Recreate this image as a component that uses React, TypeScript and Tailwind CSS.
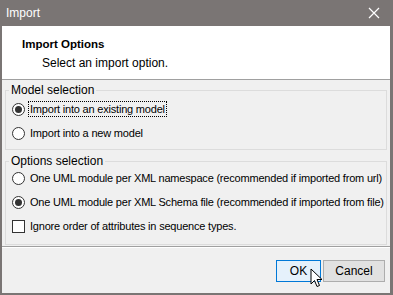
import React, { useState } from "react";

const font = { fontFamily: '"Liberation Sans", Arial, sans-serif' };

const Radio: React.FC<{ checked: boolean; label: string; focused?: boolean; onClick: () => void }> = ({
  checked,
  label,
  focused,
  onClick,
}) => (
  <div className="flex items-center h-[24px] pl-[6px] cursor-default whitespace-nowrap" onClick={onClick}>
    <span className="w-[13px] h-[13px] shrink-0 rounded-full border border-[#333] bg-white flex items-center justify-center">
      {checked && <span className="w-[7px] h-[7px] rounded-full bg-[#333]" />}
    </span>
    <span
      className={
        "ml-[4px] leading-[14px] px-[1px] tracking-[-0.2px] " +
        (focused ? "outline outline-1 outline-dotted outline-black" : "")
      }
    >
      {label}
    </span>
  </div>
);

const App: React.FC = () => {
  const [model, setModel] = useState("existing");
  const [mode, setMode] = useState("file");
  const [ignoreOrder, setIgnoreOrder] = useState(false);

  return (
    <div
      className="w-[393px] h-[295px] bg-[#7a7574] pl-[2px] pr-[3px] pb-[2px] flex flex-col text-[11px] text-black"
      style={font}
    >
      <div className="h-[26px] flex items-center justify-between text-white">
        <span className="pl-[4px] text-[12px]">Import</span>
        <svg width="12" height="12" viewBox="0 0 12 12" className="mr-[10px]">
          <path d="M1 1L11 11M11 1L1 11" stroke="white" strokeWidth="1.2" />
        </svg>
      </div>

      <div className="flex-1 bg-[#f0f0f0] flex flex-col">
        <div className="h-[54px] bg-white border-b border-[#a0a0a0] pt-[10px] pl-[20px] text-[12px]">
          <div className="font-bold leading-[16px] text-[11.5px]">Import Options</div>
          <div className="pl-[20px] mt-[3px] leading-[16px]">Select an import option.</div>
        </div>

        <div className="px-[3px] pt-[2px]">
          <fieldset className="min-w-0 border border-[#dcdcdc] px-[0px] pb-[4px] h-[68px]">
            <legend className="ml-[3px] px-[2px] leading-[16px] text-[12px]">Model selection</legend>
            <div className="-mt-[1px]">
              <Radio
                checked={model === "existing"}
                label="Import into an existing model"
                focused
                onClick={() => setModel("existing")}
              />
              <Radio checked={model === "new"} label="Import into a new model" onClick={() => setModel("new")} />
            </div>
          </fieldset>

          <fieldset className="min-w-0 border border-[#dcdcdc] mt-[3px] h-[92px]">
            <legend className="ml-[3px] px-[2px] leading-[16px] text-[12px]">Options selection</legend>
            <div className="-mt-[3px]">
              <Radio
                checked={mode === "namespace"}
                label="One UML module per XML namespace (recommended if imported from url)"
                onClick={() => setMode("namespace")}
              />
              <Radio
                checked={mode === "file"}
                label="One UML module per XML Schema file (recommended if imported from file)"
                onClick={() => setMode("file")}
              />
              <div
                className="flex items-center h-[24px] pl-[6px] cursor-default"
                onClick={() => setIgnoreOrder(!ignoreOrder)}
              >
                <span className="w-[13px] h-[13px] border border-[#333] bg-white flex items-center justify-center">
                  {ignoreOrder && (
                    <svg width="9" height="9" viewBox="0 0 9 9">
                      <path d="M1 4.5L3.5 7L8 1.5" stroke="#333" strokeWidth="1.4" fill="none" />
                    </svg>
                  )}
                </span>
                <span className="ml-[5px] tracking-[-0.2px]">Ignore order of attributes in sequence types.</span>
              </div>
            </div>
          </fieldset>
        </div>

        <div className="mt-[1px] border-t border-[#a0a0a0] border-b-0">
          <div className="border-t border-white" />
        </div>

        <div className="flex justify-end gap-[2px] pr-[5px] pt-[12px] text-[12px]">
          <div className="relative">
            <button className="w-[45px] h-[22px] border border-[#0078d7] bg-[#e5f1fb]">OK</button>
            <svg
              width="14"
              height="22"
              viewBox="0 0 14 22"
              className="absolute left-[34px] top-[8px] pointer-events-none"
            >
              <path
                d="M1 1L1 16L4.5 12.5L7 18.5L9.5 17.5L7 11.5L12 11.5Z"
                fill="white"
                stroke="black"
                strokeWidth="1"
                strokeLinejoin="miter"
              />
            </svg>
          </div>
          <button className="w-[62px] h-[22px] border border-[#adadad] bg-[#e1e1e1]">Cancel</button>
        </div>
      </div>
    </div>
  );
};

export default App;
